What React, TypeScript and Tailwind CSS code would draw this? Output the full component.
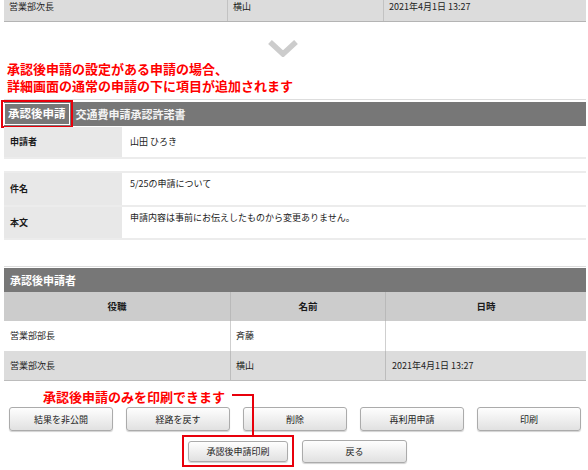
import React from "react";

// 承認後申請 detail screen — annotated manual screenshot

const topRow = ["営業部次長", "横山", "2021年4月1日 13:27"];

const approvers = [
  { role: "営業部部長", name: "斉藤", date: "", bg: "bg-white", line: "border-[#cfcfcf]" },
  { role: "営業部次長", name: "横山", date: "2021年4月1日 13:27", bg: "bg-[#dcdcdc]", line: "border-[#bdbdbd]" },
];

const actions = ["結果を非公開", "経路を戻す", "削除", "再利用申請", "印刷"];

function Btn({ label, className = "" }: { label: string; className?: string }) {
  return (
    <button
      className={
        "flex items-center justify-center rounded-[3px] border border-[#ababab] bg-linear-to-b from-[#fefefe] to-[#e1e1e1] text-[9px] leading-none text-[#222] shadow-[0_1px_1px_rgba(0,0,0,0.18)] " +
        className
      }
    >
      {label}
    </button>
  );
}

function InfoRow({ label, value, h, top }: { label: string; value: string; h: string; top?: boolean }) {
  return (
    <div className={"flex border-b-2 border-[#ececec] " + h}>
      <div className="flex w-[118px] items-center bg-[#e8e8e8] pl-[6px] text-[9px] font-bold text-[#1a1a1a]">
        {label}
      </div>
      <div
        className={
          "flex flex-1 pl-[8px] text-[9px] leading-[12px] text-[#222] " +
          (top ? "items-start pt-[5px]" : "items-center")
        }
      >
        {value}
      </div>
    </div>
  );
}

export default function App() {
  return (
    <div className="h-[470px] w-[588px] overflow-hidden bg-white font-['Meiryo','Noto_Sans_CJK_JP',sans-serif] text-[#222]">
      <div className="ml-[4px] mr-[2px]">
        {/* tail of the previous approvers table */}
        <div className="-mt-[8px] grid h-[30px] grid-cols-[224px_156px_1fr] border-b border-[#b4b4b4] bg-[#dcdcdc] text-[9px]">
          {topRow.map((t, i) => (
            <div
              key={i}
              className={"flex items-center pl-[5px] " + (i < 2 ? "border-r border-[#c2c2c2]" : "")}
            >
              {t}
            </div>
          ))}
        </div>

        {/* down chevron */}
        <div className="mt-[18px] pl-[264px]">
          <svg width="30" height="17" viewBox="0 0 30 17">
            <path d="M2 2 L15 14 L28 2" fill="none" stroke="#cccccc" strokeWidth="5.5" />
          </svg>
        </div>

        <div className="mt-[3px] pl-[3px] text-[13px] font-bold leading-[17px] text-[#ff0000]">
          <div className="h-[17px]">承認後申請の設定がある申請の場合、</div>
          <div className="h-[17px]">詳細画面の通常の申請の下に項目が追加されます</div>
        </div>

        {/* 承認後申請 block */}
        <div className="mt-[5px] border-t border-[#dddddd] pt-[2px]">
          <div className="flex h-[24px] items-center bg-[#777777]">
            <span className="flex h-[22px] items-center border border-white px-[3px] text-[11.5px] font-bold text-white outline-2 outline-offset-[1px] outline-[#e8000b]">
              承認後申請
            </span>
            <span className="ml-[6px] text-[11px] font-bold text-[#f4f4f4]">交通費申請承認許諾書</span>
          </div>

          <div className="mt-[1px]">
            <InfoRow label="申請者" value="山田 ひろき" h="h-[32px]" />
          </div>

          <div className="mt-[12px] border-t-2 border-[#ececec]">
            <InfoRow label="件名" value="5/25の申請について" h="h-[34px]" top />
            <InfoRow label="本文" value="申請内容は事前にお伝えしたものから変更ありません。" h="h-[33px]" top />
          </div>
        </div>

        {/* 承認後申請者 table */}
        <div className="mt-[26px] border-t border-[#dddddd] pt-[1px]">
          <div className="flex h-[24px] items-center bg-[#777777] pl-[6px] text-[11px] font-bold text-white">
            承認後申請者
          </div>
          <div className="grid h-[29px] grid-cols-[227px_155px_1fr] bg-[#cccccc] text-[9.5px] font-bold text-[#1a1a1a]">
            <div className="flex items-center justify-center border-r border-[#b9b9b9]">役職</div>
            <div className="flex items-center justify-center border-r border-[#b9b9b9]">名前</div>
            <div className="flex items-center justify-center">日時</div>
          </div>
          {approvers.map((a, i) => (
            <div
              key={i}
              className={
                "grid h-[30px] grid-cols-[227px_155px_1fr] text-[9px] " +
                a.bg +
                (i === approvers.length - 1 ? " border-b border-[#bcbcbc]" : "")
              }
            >
              <div className={"flex items-center border-r pl-[6px] " + a.line}>{a.role}</div>
              <div className={"flex items-center border-r pl-[5px] " + a.line}>{a.name}</div>
              <div className="flex items-center pl-[6px]">{a.date}</div>
            </div>
          ))}
        </div>

        {/* buttons + annotation */}
        <div className="relative mt-[8px]">
          <div className="h-[16px] pl-[39px] text-[13px] font-bold leading-[16px] text-[#ff0000]">
            承認後申請のみを印刷できます
          </div>
          <div className="absolute left-[228px] top-[5px] h-[42px] w-[22px] border-r-2 border-t-2 border-[#e8000b]" />

          <div className="mt-[2px] flex gap-[13px] pl-[5px]">
            {actions.map((a) => (
              <Btn key={a} label={a} className="h-[24px] w-[104px]" />
            ))}
          </div>

          <div className="mt-[9px] flex h-[23px] items-center gap-[14px] pl-[184px]">
            <div className="relative">
              <Btn label="承認後申請印刷" className="h-[21px] w-[100px]" />
              {/* red highlight frame */}
              <div className="pointer-events-none absolute -inset-x-[6px] -top-[6px] -bottom-[5px] border-2 border-[#e8000b]" />
            </div>
            <Btn label="戻る" className="h-[23px] w-[105px]" />
          </div>
        </div>
      </div>
    </div>
  );
}
